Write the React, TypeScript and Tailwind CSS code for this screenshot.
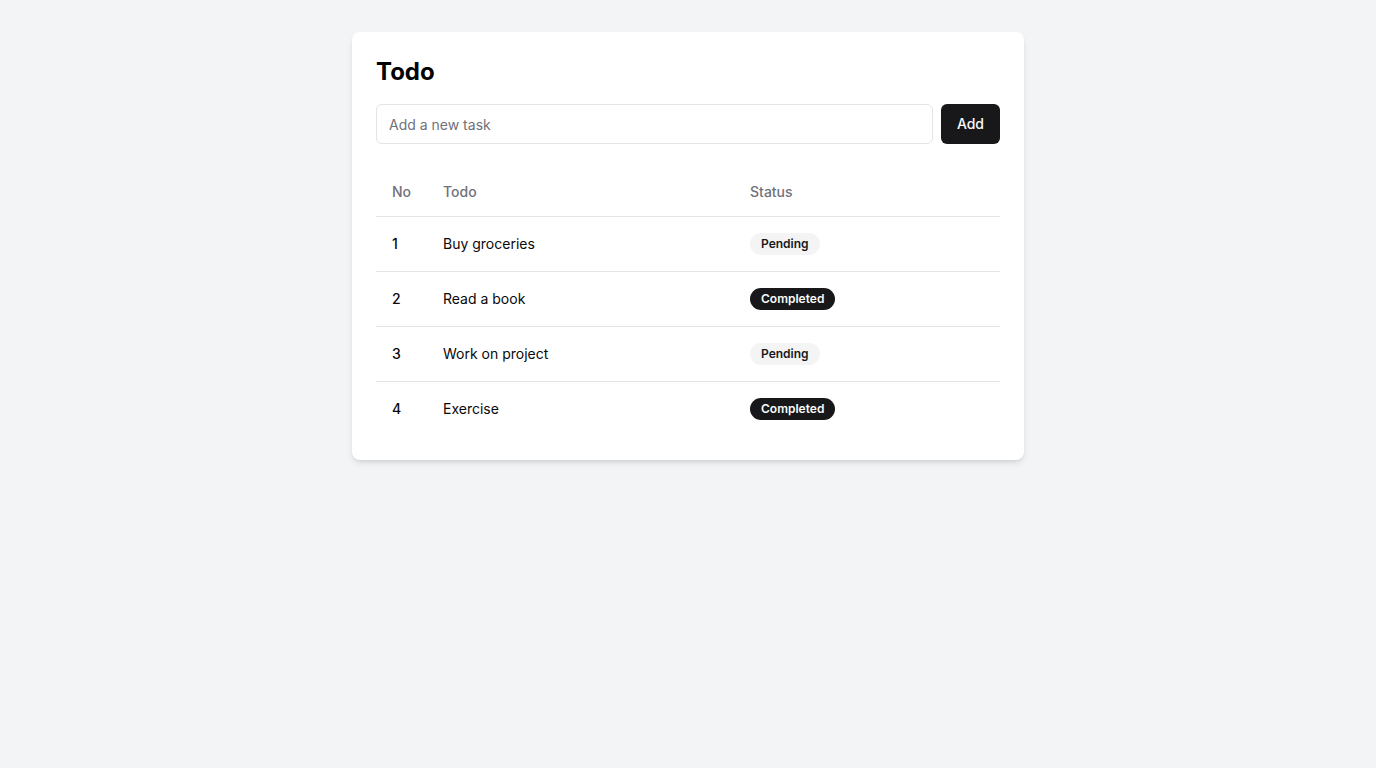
import { useState } from "react";

type Task = { id: number; title: string; done: boolean };

const initialTasks: Task[] = [
  { id: 1, title: "Buy groceries", done: false },
  { id: 2, title: "Read a book", done: true },
  { id: 3, title: "Work on project", done: false },
  { id: 4, title: "Exercise", done: true },
];

const StatusBadge = ({ done }: { done: boolean }) =>
  done ? (
    <span className="inline-flex items-center rounded-full border border-transparent bg-[#18181b] px-2.5 py-0.5 text-xs font-semibold text-[#fafafa]">
      Completed
    </span>
  ) : (
    <span className="inline-flex items-center rounded-full border border-transparent bg-[#f4f4f5] px-2.5 py-0.5 text-xs font-semibold text-[#18181b]">
      Pending
    </span>
  );

export default function App() {
  const [tasks, setTasks] = useState<Task[]>(initialTasks);
  const [text, setText] = useState("");

  const addTask = () => {
    if (!text.trim()) return;
    setTasks((prev) => [
      ...prev,
      { id: prev.length + 1, title: text.trim(), done: false },
    ]);
    setText("");
  };

  return (
    <div className="min-h-screen bg-[#f3f4f6] pt-8 font-['Inter',sans-serif] text-[#09090b]">
      <div className="mx-auto max-w-2xl rounded-lg bg-white p-6 shadow-md">
        <h1 className="mb-4 text-2xl font-bold text-black">Todo</h1>
        <div className="flex gap-2">
          <input
            value={text}
            onChange={(e) => setText(e.target.value)}
            placeholder="Add a new task"
            className="h-10 flex-1 rounded-md border border-[#e4e4e7] bg-white px-3 text-sm placeholder:text-[#71717a] outline-none"
          />
          <button
            onClick={addTask}
            className="h-10 rounded-md bg-[#18181b] px-4 text-sm font-medium text-[#fafafa]"
          >
            Add
          </button>
        </div>
        <table className="mt-6 w-full table-fixed text-sm">
          <colgroup>
            <col className="w-[51px]" />
            <col className="w-[307px]" />
            <col />
          </colgroup>
          <thead>
            <tr className="border-b border-[#e4e4e7]">
              <th className="h-12 px-4 text-left align-middle font-medium text-[#71717a]">
                No
              </th>
              <th className="h-12 px-4 text-left align-middle font-medium text-[#71717a]">
                Todo
              </th>
              <th className="h-12 px-4 text-left align-middle font-medium text-[#71717a]">
                Status
              </th>
            </tr>
          </thead>
          <tbody>
            {tasks.map((task, i) => (
              <tr
                key={task.id}
                className={
                  i === tasks.length - 1 ? "" : "border-b border-[#e4e4e7]"
                }
              >
                <td className="p-4 align-middle font-medium">{task.id}</td>
                <td className="p-4 align-middle">{task.title}</td>
                <td className="p-4 align-middle">
                  <StatusBadge done={task.done} />
                </td>
              </tr>
            ))}
          </tbody>
        </table>
      </div>
    </div>
  );
}
